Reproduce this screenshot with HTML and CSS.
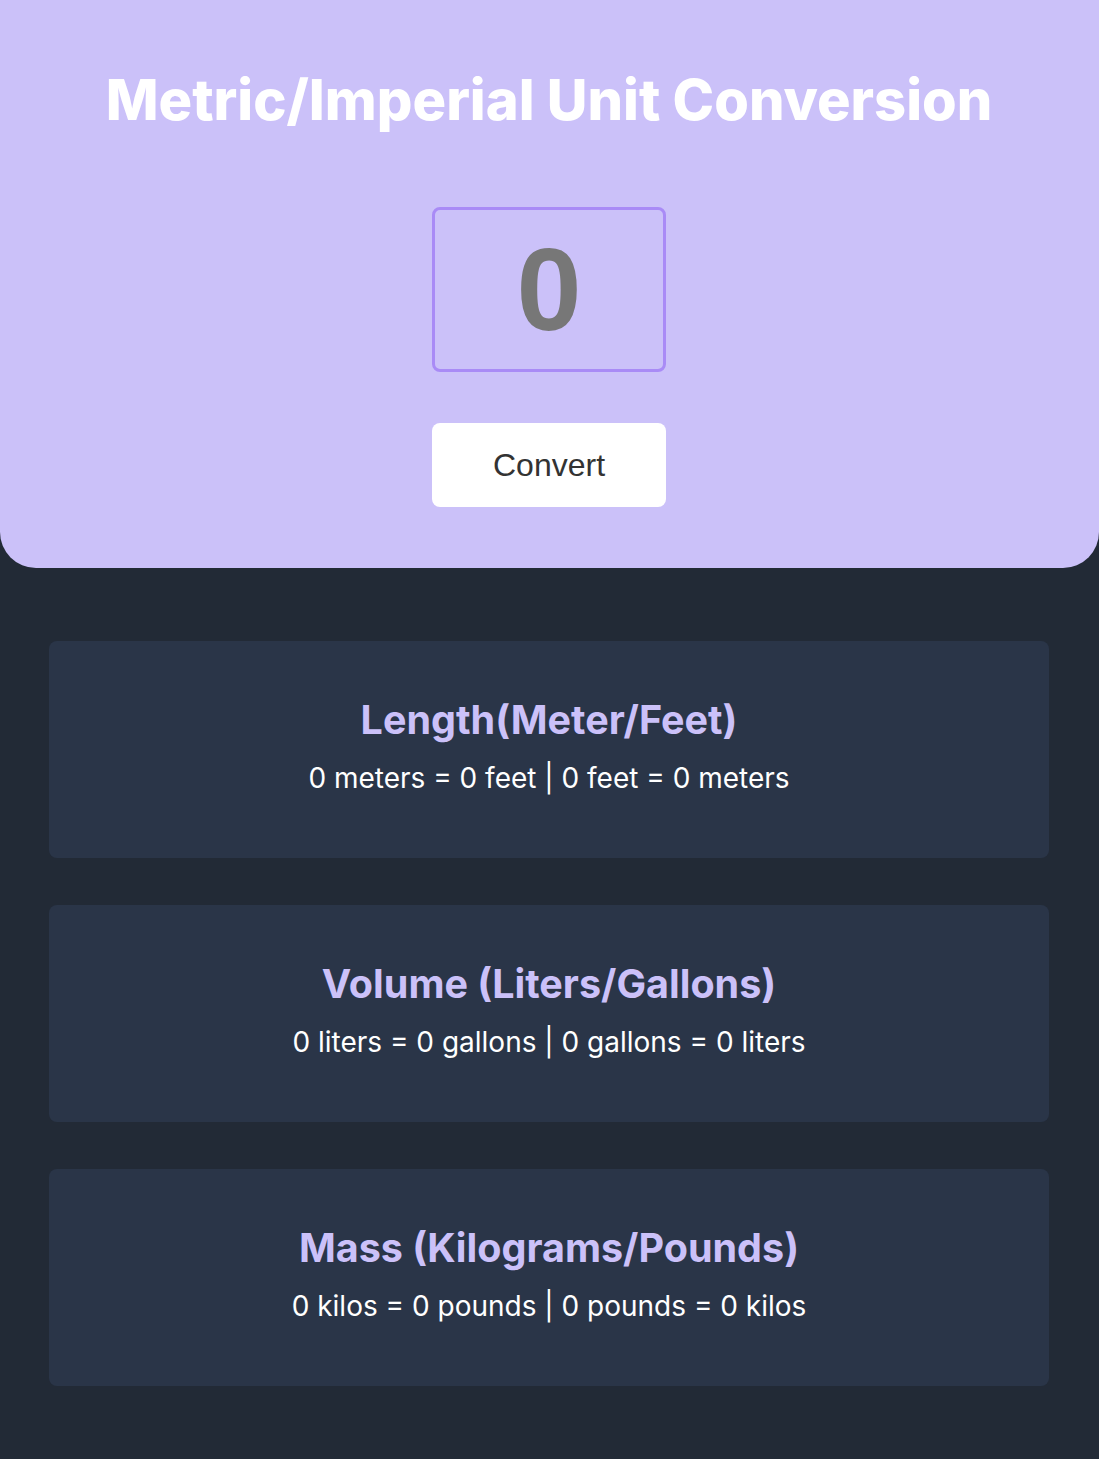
FILE: index.html
```html
<!DOCTYPE html>
<html lang="en">
<head>
<meta charset="utf-8">
<title>Metric/Imperial Unit Conversion</title>
<link rel="stylesheet" href="styles.css">
</head>
<body>
<header class="hero">
  <h1 class="hero-title">Metric/Imperial Unit Conversion</h1>
  <input class="num-input" type="text" value="0">
  <button class="convert-btn">Convert</button>
</header>
<main class="results">
  <section class="card">
    <h2 class="card-title">Length(Meter/Feet)</h2>
    <p class="card-text">0 meters = 0 feet | 0 feet = 0 meters</p>
  </section>
  <section class="card">
    <h2 class="card-title">Volume (Liters/Gallons)</h2>
    <p class="card-text">0 liters = 0 gallons | 0 gallons = 0 liters</p>
  </section>
  <section class="card">
    <h2 class="card-title">Mass (Kilograms/Pounds)</h2>
    <p class="card-text">0 kilos = 0 pounds | 0 pounds = 0 kilos</p>
  </section>
</main>
</body>
</html>
```

FILE: styles.css
```css
* { box-sizing: border-box; }
html, body { margin: 0; padding: 0; }
body {
  background: #222a36;
  font-family: Inter, "Noto Sans", sans-serif;
  min-height: 1459px;
}
.hero {
  background: #cbc1f9;
  border-radius: 0 0 36px 36px;
  height: 568px;
  display: flex;
  flex-direction: column;
  align-items: center;
  padding: 66px 1px 0 0;
}
.hero-title {
  margin: 0;
  color: #fff;
  font-size: 56px;
  font-weight: 800;
  line-height: 68px;
  letter-spacing: 0;
}
.num-input {
  margin-top: 73px;
  width: 234px;
  height: 165px;
  border: 3px solid #a98bf6;
  border-radius: 8px;
  background: transparent;
  text-align: center;
  font-family: "Liberation Sans", Arial, sans-serif;
  font-weight: 700;
  font-size: 117px;
  color: #777777;
  padding: 0;
  outline: none;
}
.convert-btn {
  margin-top: 51px;
  width: 234px;
  height: 84px;
  border: none;
  border-radius: 8px;
  background: #fff;
  color: #333;
  font-family: "Liberation Sans", Arial, sans-serif;
  font-size: 32px;
  cursor: pointer;
}
.results {
  display: flex;
  flex-direction: column;
  gap: 47px;
  padding: 73px 50px 73px 49px;
}
.card {
  height: 217px;
  background: #2a3548;
  border-radius: 8px;
  display: flex;
  flex-direction: column;
  align-items: center;
  justify-content: center;
  text-align: center;
  padding-bottom: 8px;
}
.card-title {
  margin: 0;
  color: #cbc1f9;
  font-size: 39.5px;
  font-weight: 700;
  line-height: 48px;
}
.card-text {
  margin: 17px 0 0;
  color: #fff;
  font-size: 28px;
  line-height: 34px;
}
```
